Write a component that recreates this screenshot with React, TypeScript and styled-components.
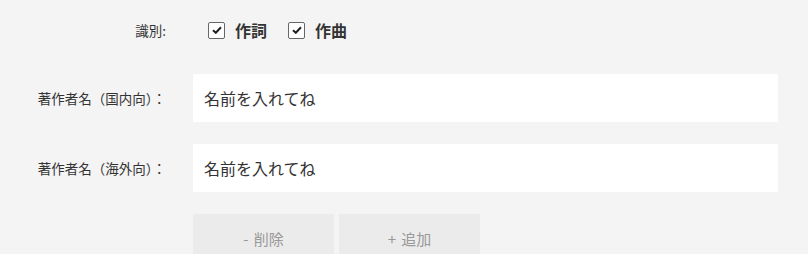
import React from 'react';
import styled, { createGlobalStyle } from 'styled-components';

const GlobalStyle = createGlobalStyle`
  html, body {
    margin: 0;
    padding: 0;
    background: #f4f4f4;
  }
  body {
    font-family: "Noto Sans CJK JP", "Noto Sans", sans-serif;
    color: #333;
  }
`;

function CheckItem({ label }: { label: string }) {
  return (
    <CheckLabel>
      <Box>
        <svg width="10" height="8" viewBox="0 0 10 8">
          <path d="M1 4.2 L3.8 6.8 L9 1.2" fill="none" stroke="#222" strokeWidth="2" />
        </svg>
      </Box>
      <span>{label}</span>
    </CheckLabel>
  );
}

function App() {
  return (
    <>
      <GlobalStyle />
      <Form>
        <Row $height={44}>
          <Label>識別:</Label>
          <Field>
            <CheckItem label='作詞' />
            <CheckItem label='作曲' />
          </Field>
        </Row>
        <Row $height={48}>
          <Label>著作者名（国内向）：</Label>
          <Input defaultValue='名前を入れてね' />
        </Row>
        <Row $height={48}>
          <Label>著作者名（海外向）：</Label>
          <Input defaultValue='名前を入れてね' />
        </Row>
        <Row $height={48}>
          <Label />
          <Buttons>
            <Button>- 削除</Button>
            <Button>+ 追加</Button>
          </Buttons>
        </Row>
      </Form>
    </>
  );
}

export default App;

const Form = styled.div`
  display: flex;
  flex-direction: column;
  gap: 22px;
  padding: 8px 30px 0 0;
  width: 808px;
  box-sizing: border-box;
`;

const Row = styled.div<{ $height: number }>`
  display: grid;
  grid-template-columns: 193px 1fr;
  align-items: center;
  height: ${(p) => p.$height}px;
`;

const Label = styled.div`
  font-size: 13.5px;
  text-align: right;
  padding-right: 27px;
  color: #333;
  white-space: nowrap;
`;

const Field = styled.div`
  display: flex;
  align-items: center;
  gap: 21px;
  padding-left: 15px;
`;

const CheckLabel = styled.label`
  display: flex;
  align-items: center;
  gap: 10px;
  font-size: 16px;
  font-weight: 700;
  color: #333;
`;

const Box = styled.span`
  width: 17px;
  height: 17px;
  box-sizing: border-box;
  border: 1.5px solid #666;
  border-radius: 2px;
  background: #fff;
  display: flex;
  align-items: center;
  justify-content: center;
`;

const Input = styled.input`
  height: 48px;
  box-sizing: border-box;
  border: none;
  outline: none;
  background: #fff;
  padding: 0 11px;
  font-family: "Noto Sans CJK JP", "Noto Sans", sans-serif;
  font-size: 16px;
  color: #333;
  width: 100%;
`;

const Buttons = styled.div`
  display: flex;
  gap: 5px;
`;

const Button = styled.button`
  width: 141px;
  height: 48px;
  border: none;
  background: #ebebeb;
  color: #999;
  font-family: "Noto Sans CJK JP", "Noto Sans", sans-serif;
  font-size: 15px;
  word-spacing: 2px;
  cursor: pointer;
`;
